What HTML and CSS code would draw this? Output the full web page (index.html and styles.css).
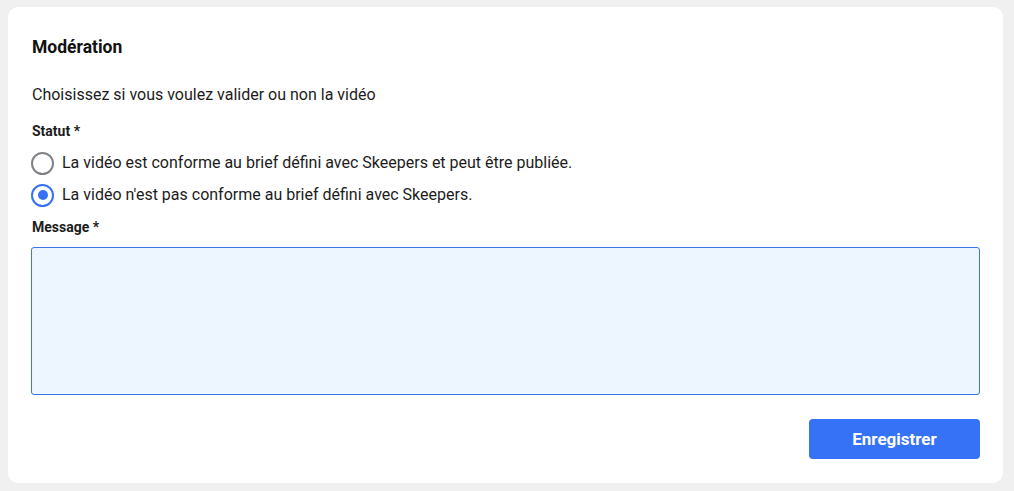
FILE: index.html
```html
<!DOCTYPE html>
<html lang="fr">
<head>
<meta charset="utf-8">
<link rel="stylesheet" href="styles.css">
</head>
<body>
<div class="card">
  <h2 class="title">Modération</h2>
  <p class="desc">Choisissez si vous voulez valider ou non la vidéo</p>
  <div class="label">Statut *</div>
  <label class="radio"><span class="dot"></span><span>La vidéo est conforme au brief défini avec Skeepers et peut être publiée.</span></label>
  <label class="radio checked"><span class="dot"></span><span>La vidéo n'est pas conforme au brief défini avec Skeepers.</span></label>
  <div class="label msg">Message *</div>
  <textarea class="area"></textarea>
  <div class="actions"><button class="btn">Enregistrer</button></div>
</div>
</body>
</html>
```
FILE: styles.css
```css
html, body { margin: 0; }
body {
  background: #f0f0f0;
  padding: 7px 11px 8px 8px;
  font-family: Roboto, "Noto Sans", sans-serif;
  color: #1c1c1c;
}
.card {
  background: #fff;
  border-radius: 10px;
  height: 476px;
  box-sizing: border-box;
  padding: 29px 23px 0 23px;
}
.title {
  margin: 0 0 0 1px;
  font-size: 17.5px;
  font-weight: 700;
  line-height: 22px;
  color: #111;
}
.desc {
  margin: 27px 0 0 1px;
  font-size: 16px;
  line-height: 20px;
}
.label {
  margin: 18px 0 0 1px;
  font-size: 14px;
  font-weight: 700;
  line-height: 16px;
}
.label.msg { margin-top: 12px; }
.radio {
  display: flex;
  align-items: center;
  gap: 8px;
  height: 24px;
  margin: 12px 0 0 0;
  font-size: 16px;
  line-height: 24px;
}
.radio + .radio { margin-top: 8px; }
.dot {
  width: 19px;
  height: 19px;
  border: 2px solid #808086;
  border-radius: 50%;
  box-sizing: content-box;
  position: relative;
  flex: none;
}
.checked .dot { border-color: #3572f5; }
.checked .dot::after {
  content: "";
  position: absolute;
  left: 4.5px; top: 4.5px;
  width: 10px; height: 10px;
  border-radius: 50%;
  background: #3572f5;
}
.area {
  display: block;
  margin-top: 12px;
  width: 949px;
  height: 148px;
  box-sizing: border-box;
  border: 1px solid #3a74e8;
  border-radius: 3px;
  background: #edf6fe;
  resize: none;
}
.actions {
  display: flex;
  justify-content: flex-end;
  margin-top: 24px;
  width: 949px;
}
.btn {
  width: 171px;
  height: 40px;
  border: none;
  border-radius: 4px;
  background: #3572f5;
  color: #fff;
  font-family: Roboto, sans-serif;
  font-weight: 700;
  font-size: 17px;
  padding: 0;
}
```
